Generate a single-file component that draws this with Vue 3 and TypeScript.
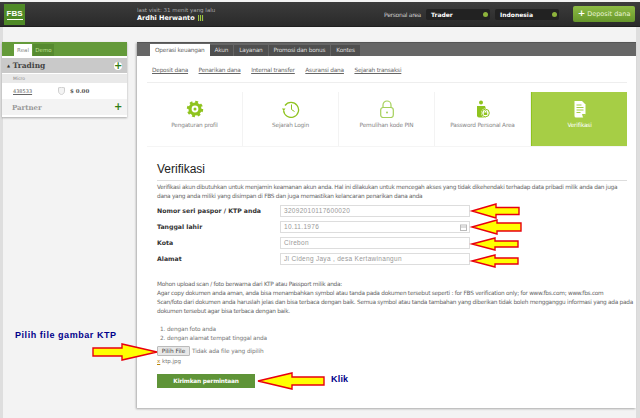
<script setup lang="ts">
const topTabs = ['Akun', 'Layanan', 'Promosi dan bonus', 'Kontes']
const subLinks = ['Deposit dana', 'Penarikan dana', 'Internal transfer', 'Asuransi dana', 'Sejarah transaksi']
const fields = [
  { label: 'Nomor seri paspor / KTP anda', value: '32092010117600020', date: false },
  { label: 'Tanggal lahir', value: '10.11.1976', date: true },
  { label: 'Kota', value: 'Cirebon', date: false },
  { label: 'Alamat', value: 'Jl Cideng Jaya , desa Kertawinangun', date: false }
]
const tiles = [
  { key: 'gear', label: 'Pengaturan profil' },
  { key: 'clock', label: 'Sejarah Login' },
  { key: 'lock', label: 'Pemulihan kode PIN' },
  { key: 'user', label: 'Password Personal Area' },
  { key: 'doc', label: 'Verifikasi' }
]
// tip x/y, head base x, head half height, shaft half height, tail x
const arrows = [
  [472, 211, 496, 7, 3.5, 519],
  [472, 227, 497, 7, 4, 521],
  [472, 244, 495, 6, 3, 518],
  [472, 261, 495, 6, 3, 518],
  [157, 352, 122, 8, 4, 93],
  [258, 381, 292, 8, 4, 324]
]
function arrowPoints(a: number[]) {
  const [x, y, hx, hh, sh, tx] = a
  return `${x},${y} ${hx},${y - hh} ${hx},${y - sh} ${tx},${y - sh} ${tx},${y + sh} ${hx},${y + sh} ${hx},${y + hh}`
}
</script>

<template>
  <div class="page">
    <header class="topbar">
      <div class="logo"><span>FBS</span></div>
      <div class="who">
        <div class="visit">last visit: 31 menit yang lalu</div>
        <div class="name">Ardhi Herwanto <i class="bars"></i></div>
      </div>
      <div class="top-right">
        <span class="area">Personal area</span>
        <div class="select">Trader<i></i></div>
        <div class="select">Indonesia<i></i></div>
        <div class="deposit"><b>+</b> Deposit dana</div>
      </div>
    </header>

    <main class="main">
      <aside class="side">
        <div class="side-tabs">
          <span class="side-tab active">Real</span>
          <span class="side-tab">Demo</span>
        </div>
        <div class="trading">
          <span><em>▲</em> Trading</span>
          <span class="plus round">+</span>
        </div>
        <div class="micro">Micro</div>
        <div class="account">
          <u>438533</u>
          <svg class="shield" width="7" height="8" viewBox="0 0 7 8"><path d="M.5.8 3.5.3l3 .5v3.4C6.5 6 5 7.200 3.500 7.700 2 7.200.5 6 .5 4.200z" fill="#f4f4f4" stroke="#c4c4c4" stroke-width=".8" /></svg>
          <b>$ 0.00</b>
        </div>
        <div class="partner">
          <span>Partner</span>
          <span class="plus">+</span>
        </div>
      </aside>

      <section class="card">
        <nav class="tabs">
          <span class="tab active">Operasi keuangan</span>
          <span v-for="t in topTabs" :key="t" class="tab">{{ t }}</span>
        </nav>
        <div class="body">
          <div class="links">
            <a v-for="l in subLinks" :key="l">{{ l }}</a>
          </div>
          <div class="tiles">
            <div v-for="t in tiles" :key="t.key" class="tile" :class="{ on: t.key === 'doc' }">
              <svg class="ico" width="18" height="18" viewBox="0 0 18 18">
                <g v-if="t.key === 'gear'">
                  <circle cx="9" cy="9" r="5" fill="none" stroke="#8fc31f" stroke-width="3.200" />
                  <circle cx="9" cy="9" r="7" fill="none" stroke="#8fc31f" stroke-width="2.400" stroke-dasharray="2.800 2.700" />
                  <circle cx="9" cy="9" r="1.500" fill="#8fc31f" />
                </g>
                <g v-else-if="t.key === 'clock'" fill="none" stroke="#8fc31f">
                  <path d="M3 5.500A7.500 7.500 0 1 1 1.600 10.500" stroke-width="1.300" />
                  <path d="M9.500 4.500V9.500L12.500 11.500" stroke-width="1" />
                  <path d="M0 8.500h3.500L1.700 11z" fill="#8fc31f" stroke="none" />
                </g>
                <g v-else-if="t.key === 'lock'" fill="none" stroke="#a5d05a">
                  <path d="M5 8V5a4 4 0 0 1 8 0v3" stroke-width="1.200" />
                  <rect x="2.700" y="7.500" width="12.600" height="10" rx="2.500" stroke-width="1.200" />
                  <circle cx="9" cy="12.500" r="1" fill="#a5d05a" stroke="none" />
                </g>
                <g v-else-if="t.key === 'user'">
                  <circle cx="7" cy="2.500" r="2" fill="#8fc31f" />
                  <path d="M3 6h8l1 3v8.500H5A2 2 0 0 1 3 15.500z" fill="#8fc31f" />
                  <circle cx="11.500" cy="13" r="4.500" fill="#fff" />
                  <circle cx="11.500" cy="13" r="3.800" fill="none" stroke="#8fc31f" />
                  <rect x="9.800" y="12.500" width="3.400" height="2.500" fill="#8fc31f" />
                  <path d="M10.500 12.500v-1a1 1 0 0 1 2 0v1" fill="none" stroke="#8fc31f" stroke-width=".7" />
                </g>
                <g v-else>
                  <path d="M3.500 1H11l3.500 3.500V14l-2.500 3.500H5A1.500 1.500 0 0 1 3.500 16z" fill="#fff" />
                  <path d="M5.500 5h5M5.500 7.500h7M5.500 10h7M5.500 12.500h4" stroke="#a6ce45" stroke-width="1" />
                  <path d="M11 14h3.500v1.500h-1v2h-1.500z" fill="#a6ce45" />
                </g>
              </svg>
              <span>{{ t.label }}</span>
            </div>
          </div>

          <div class="verify">
            <h1>Verifikasi</h1>
            <p class="intro">Verifikasi akun dibutuhkan untuk menjamin keamanan akun anda. Hal ini dilakukan untuk mencegah akses yang tidak dikehendaki terhadap data pribadi milik anda dan juga<br />dana yang anda miliki yang disimpan di FBS dan juga memastikan kelancaran penarikan dana anda</p>
            <div class="form">
              <template v-for="f in fields" :key="f.label">
                <label>{{ f.label }}</label>
                <div class="input">
                  {{ f.value }}
                  <svg v-if="f.date" class="cal" width="7" height="7" viewBox="0 0 7 7"><rect x=".5" y="1" width="6" height="5.500" fill="none" stroke="#bbb" /><path d="M1 3h5" stroke="#bbb" /></svg>
                </div>
              </template>
            </div>
            <p class="note">Mohon upload scan / foto berwarna dari KTP atau Passport milik anda:<br />Agar copy dokumen anda aman, anda bisa menambahkan symbol atau tanda pada dokumen tersebut seperti : for FBS verification only; for www.fbs.com; www.fbs.com<br />Scan/foto dari dokumen anda haruslah jelas dan bisa terbaca dengan baik. Semua symbol atau tanda tambahan yang diberikan tidak boleh mengganggu informasi yang ada pada<br />dokumen tersebut agar bisa terbaca dengan baik.</p>
            <ol class="list">
              <li>dengan foto anda</li>
              <li>dengan alamat tempat tinggal anda</li>
            </ol>
            <div class="file"><button>Pilih File</button><span>Tidak ada file yang dipilih</span></div>
            <div class="chosen"><u>x</u> ktp.jpg</div>
            <button class="send">Kirimkan permintaan</button>
          </div>
        </div>
      </section>
    </main>

    <svg class="marks" width="640" height="418" viewBox="0 0 640 418">
      <polygon v-for="(a, i) in arrows" :key="i" :points="arrowPoints(a)" fill="#ffff00" stroke="#e8000f" stroke-width="1.400" />
    </svg>
    <span class="hint pick">Pilih file gambar KTP</span>
    <span class="hint click">Klik</span>
  </div>
</template>

<style>
html, body { margin: 0; background: #f3f3f3; }
</style>

<style scoped>
.page {
  position: relative;
  width: 640px;
  height: 418px;
  overflow: hidden;
  background: #f3f3f3;
  font-family: "DejaVu Sans", sans-serif;
  color: #666;
  box-sizing: border-box;
  padding-top: 2px;
}
.topbar {
  display: flex;
  align-items: center;
  height: 24px;
  padding: 0 5px 0 4px;
  background: linear-gradient(#3c3c3c, #2a2a2a);
  border-bottom: 1px solid #1f1f1f;
}
.logo {
  width: 21px;
  height: 21px;
  background: #4f8a27;
  color: #fff;
  font: bold 8px "Liberation Sans", sans-serif;
  text-align: center;
  line-height: 19px;
}
.logo span { border-bottom: 1px solid #fff; padding-bottom: 1px; }
.who { margin-left: 112px; }
.visit { font-size: 5.500px; color: #aaa; line-height: 8px; white-space: nowrap; }
.name { font-size: 6.500px; font-weight: bold; color: #fff; line-height: 9px; display: flex; align-items: center; gap: 3px; white-space: nowrap; }
.bars { width: 6px; height: 6px; background: repeating-linear-gradient(90deg, #9bc53d 0 1px, #3a3a3a 1px 2px); }
.top-right { margin-left: auto; display: flex; align-items: center; }
.area { font-size: 6px; color: #ccc; margin-right: 5px; white-space: nowrap; letter-spacing: -.3px; }
.select {
  position: relative;
  width: 64px;
  height: 11px;
  line-height: 11px;
  border-radius: 2px;
  background: #222;
  color: #fff;
  font-size: 6px;
  font-weight: bold;
  padding-left: 5px;
  box-sizing: border-box;
  margin-right: 5px;
}
.select i { position: absolute; right: 2px; top: 3px; width: 5px; height: 5px; border-radius: 50%; background: #8db33c; }
.deposit {
  width: 62px;
  height: 16px;
  margin-left: 9px;
  line-height: 16px;
  text-align: center;
  color: #eaf5d5;
  font-size: 6.500px;
  background: linear-gradient(#8dbb44, #66962b);
  border-radius: 2px;
  white-space: nowrap;
}
.deposit b { color: #fff; font-size: 9px; line-height: 9px; }
.main {
  display: flex;
  align-items: flex-start;
  height: 391px;
  padding: 15px 4px 0 2px;
  box-sizing: border-box;
  background: linear-gradient(90deg, #dedede 3px, transparent 3px, transparent 636px, #dedede 636px);
}
.side { width: 125px; background: #fff; box-shadow: 0 1px 2px rgba(0,0,0,.3); padding-bottom: 2px; }
.side-tabs { display: flex; height: 14px; padding: 2px 0 0 12px; background: #649a3a; box-sizing: border-box; }
.side-tab { width: 21px; height: 12px; text-align: center; font-size: 5.500px; line-height: 12px; color: #bfe08f; background: #568a30; }
.side-tab.active { width: 18px; background: #fff; color: #888; margin-right: 1px; }
.trading {
  display: flex;
  justify-content: space-between;
  align-items: center;
  height: 15px;
  margin-top: 2px;
  padding: 0 5px;
  background: #c9c9c9;
  color: #444;
  font-size: 7.500px;
  font-weight: bold;
  font-family: "DejaVu Serif", serif;
}
.trading em { font-size: 4px; font-style: normal; vertical-align: 1px; color: #333; }
.plus { color: #2f7d14; font: 900 10px/8px "DejaVu Sans", sans-serif; width: 8px; height: 8px; text-align: center; }
.plus.round { background: #fff; border-radius: 50%; }
.micro { height: 9px; line-height: 9px; background: #e9e9e9; font-size: 4.500px; color: #888; padding-left: 11px; margin-top: 1px; }
.account { display: flex; align-items: center; height: 16px; padding-left: 11px; font-size: 5px; color: #666; }
.shield { margin-left: 26px; }
.account b { margin-left: 5px; font-size: 5.500px; font-family: "DejaVu Serif", serif; color: #555; }
.partner {
  display: flex;
  justify-content: space-between;
  align-items: center;
  height: 16px;
  padding: 0 5px 0 10px;
  background: #f3f3f3;
  color: #999;
  font: bold 7px "DejaVu Serif", serif;
}
.card { width: 499px; height: 366px; margin-left: 10px; background: #fff; box-shadow: -1px 1px 2px rgba(0,0,0,.3); }
.tabs { display: flex; height: 14px; padding: 2px 0 0 13px; background: #666; box-sizing: border-box; border-top: 1px solid #555; }
.tab { height: 11px; padding: 0 5px; line-height: 11px; font-size: 5.800px; letter-spacing: -.2px; color: #ddd; background: #4f4f4f; margin-right: 1px; white-space: nowrap; }
.tab.active { height: 13px; line-height: 13px; margin: -1px 0 0; background: #fff; color: #666; }
.body { padding: 0 9px 0 10px; }
.links { display: flex; height: 27px; align-items: center; padding: 2px 0 0 5px; gap: 10.500px; border-bottom: 1px solid #eee; font-size: 5.800px; letter-spacing: -.2px; color: #666; box-sizing: border-box; }
.links a { text-decoration: underline; white-space: nowrap; }
.tiles { display: flex; margin-top: 9px; height: 54px; border-bottom: 1px solid #f5f5f5; }
.tile { width: 96px; display: flex; flex-direction: column; align-items: center; font-size: 5.800px; letter-spacing: -.2px; color: #888; border-right: 1px solid #f3f3f3; box-sizing: border-box; padding-top: 8px; white-space: nowrap; }
.ico { margin-bottom: 4px; }
.tile.on { background: #a6ce45; color: #fff; border-left: 1px solid #8fc31f; border-right: 0; }
.verify { padding-left: 10px; }
h1 { margin: 14px 0 0; padding-bottom: 3px; font: normal 12px/16px "Liberation Sans", sans-serif; color: #222; border-bottom: 1px solid #ddd; }
.intro { margin: 2px 0 0; font-size: 5.800px; letter-spacing: -.27px; line-height: 9px; color: #666; white-space: nowrap; }
.form { display: grid; grid-template-columns: 123px 190px; row-gap: 4px; margin-top: 4px; }
.form label { font-size: 6.200px; font-weight: bold; color: #333; line-height: 12px; white-space: nowrap; }
.input { position: relative; height: 12px; border: 1px solid #ddd; box-sizing: border-box; padding-left: 3px; font: 6.500px/10px "Liberation Sans", sans-serif; color: #999; letter-spacing: .3px; white-space: nowrap; }
.cal { position: absolute; right: 2px; top: 1.500px; }
.note { margin: 15px 0 0; font-size: 5.800px; letter-spacing: -.27px; line-height: 9px; color: #666; white-space: nowrap; }
.list { margin: 9px 0 0; padding-left: 10px; font-size: 5.800px; letter-spacing: -.15px; line-height: 9px; color: #777; }
.file { display: flex; align-items: center; margin-top: 3px; height: 10px; font-size: 5.800px; letter-spacing: -.1px; color: #777; }
.file button { width: 33px; height: 10px; padding: 0; border: 1px solid #bbb; background: #e8e8e8; border-radius: 1px; font: 5.800px "DejaVu Sans", sans-serif; color: #444; margin-right: 2px; }
.chosen { margin-top: 1px; font-size: 5.500px; line-height: 9px; color: #777; }
.chosen u { color: #b8860b; }
.send { display: block; margin-top: 8px; width: 98px; height: 14px; padding: 0; border: 0; background: #5f9438; color: #fff; font: bold 5.800px "DejaVu Sans", sans-serif; letter-spacing: -.2px; }
.marks { position: absolute; left: 0; top: 0; pointer-events: none; }
.hint { position: absolute; color: #00008b; font: bold 9px "Liberation Sans", sans-serif; white-space: nowrap; letter-spacing: .55px; }
.pick { left: 15px; top: 330px; }
.click { left: 331px; top: 374px; letter-spacing: .2px; }
</style>
